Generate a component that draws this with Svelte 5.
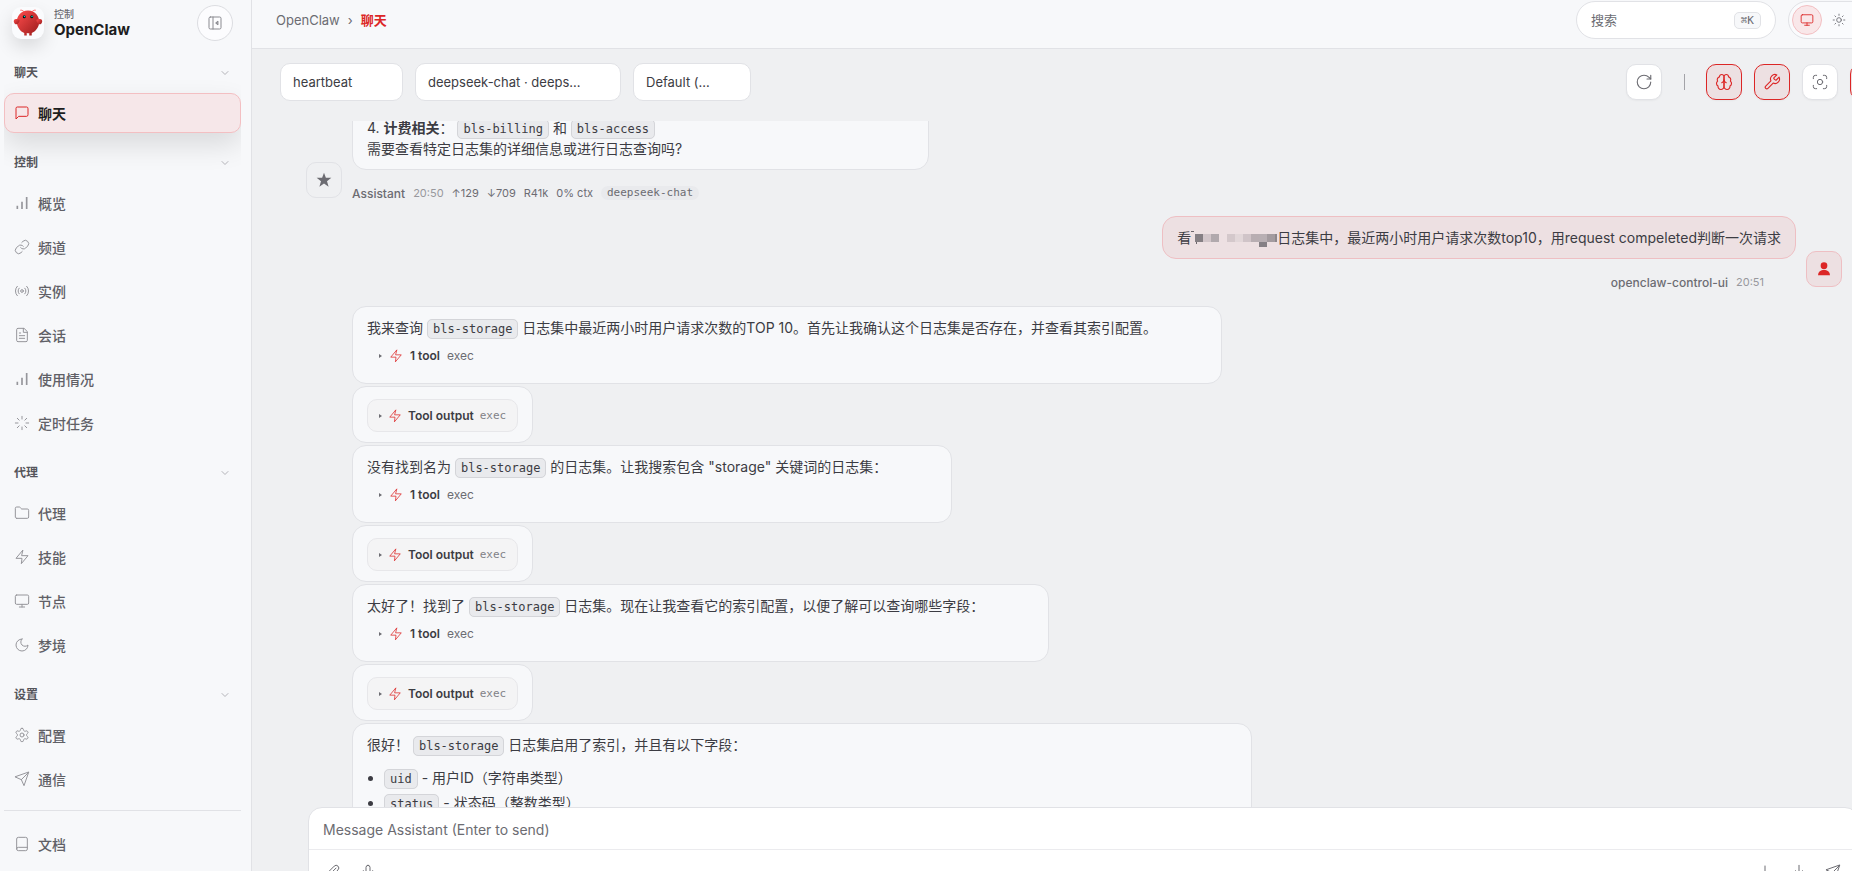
<script lang="ts">
  let draft = $state('')
  let session = $state('heartbeat')
  let model = $state('deepseek-chat · deeps…')
  let thinking = $state('Default (…')

  const icons = {
    chat: '<path d="M21 15a2 2 0 0 1-2 2H7l-4 4V5a2 2 0 0 1 2-2h14a2 2 0 0 1 2 2z"/>',
    bars: '<path stroke-width="2.5" stroke-linecap="butt" d="M12 21V10M19 21V3M5 21v-5"/>',
    link: '<path d="M10 13a5 5 0 0 0 7.54.54l3-3a5 5 0 0 0-7.07-7.07l-1.72 1.71"/><path d="M14 11a5 5 0 0 0-7.54-.54l-3 3a5 5 0 0 0 7.07 7.07l1.71-1.71"/>',
    radio: '<circle cx="12" cy="12" r="2"/><path d="M16.24 7.76a6 6 0 0 1 0 8.49M7.76 16.24a6 6 0 0 1 0-8.49M19.07 4.93a10 10 0 0 1 0 14.14M4.93 19.07a10 10 0 0 1 0-14.14"/>',
    file: '<path d="M14.5 2H6a2 2 0 0 0-2 2v16a2 2 0 0 0 2 2h12a2 2 0 0 0 2-2V7.5z"/><path d="M14 2v6h6M16 13H8M16 17H8M10 9H8"/>',
    loader: '<path d="M12 2v4M12 18v4M4.93 4.93l2.83 2.83M16.24 16.24l2.83 2.83M2 12h4M18 12h4M4.93 19.07l2.83-2.83M16.24 7.76l2.83-2.83"/>',
    folder: '<path d="M4 20h16a2 2 0 0 0 2-2V8a2 2 0 0 0-2-2h-7.93a2 2 0 0 1-1.66-.9l-.82-1.2A2 2 0 0 0 7.93 3H4a2 2 0 0 0-2 2v13c0 1.1.9 2 2 2Z"/>',
    zap: '<path d="M13 2 3 14h9l-1 8 10-12h-9z"/>',
    monitor: '<rect width="20" height="14" x="2" y="3" rx="2"/><path d="M8 21h8M12 17v4"/>',
    moon: '<path d="M12 3a6 6 0 0 0 9 9 9 9 0 1 1-9-9Z"/>',
    settings: '<path d="M12.22 2h-.44a2 2 0 0 0-2 2v.18a2 2 0 0 1-1 1.73l-.43.25a2 2 0 0 1-2 0l-.15-.08a2 2 0 0 0-2.73.73l-.22.38a2 2 0 0 0 .73 2.73l.15.1a2 2 0 0 1 1 1.72v.51a2 2 0 0 1-1 1.74l-.15.09a2 2 0 0 0-.73 2.73l.22.38a2 2 0 0 0 2.73.73l.15-.08a2 2 0 0 1 2 0l.43.25a2 2 0 0 1 1 1.73V20a2 2 0 0 0 2 2h.44a2 2 0 0 0 2-2v-.18a2 2 0 0 1 1-1.73l.43-.25a2 2 0 0 1 2 0l.15.08a2 2 0 0 0 2.73-.73l.22-.39a2 2 0 0 0-.73-2.73l-.15-.08a2 2 0 0 1-1-1.74v-.5a2 2 0 0 1 1-1.74l.15-.09a2 2 0 0 0 .73-2.73l-.22-.38a2 2 0 0 0-2.73-.73l-.15.08a2 2 0 0 1-2 0l-.43-.25a2 2 0 0 1-1-1.73V4a2 2 0 0 0-2-2z"/><circle cx="12" cy="12" r="3"/>',
    send: '<path d="m22 2-7 20-4-9-9-4Z"/><path d="M22 2 11 13"/>',
    book: '<path d="M4 19.5v-15A2.5 2.5 0 0 1 6.5 2h11A2.5 2.5 0 0 1 20 4.5v15a2.5 2.5 0 0 1-2.5 2.5h-11A2.5 2.5 0 0 1 4 19.5 2.5 2.5 0 0 1 6.5 17H20"/>',
    chevron: '<path d="m6 9 6 6 6-6"/>',
    panel: '<rect width="18" height="18" x="3" y="3" rx="2"/><path d="M9 3v18"/><path d="M16 9.5 13 12l3 2.5z" fill="currentColor"/>',
    sun: '<circle cx="12" cy="12" r="4"/><path d="M12 2v2M12 20v2M4.93 4.93l1.41 1.41M17.66 17.66l1.41 1.41M2 12h2M20 12h2M6.34 17.66l-1.41 1.41M19.07 4.93l-1.41 1.41"/>',
    refresh: '<path d="M21 12a9 9 0 1 1-9-9c2.52 0 4.93 1 6.74 2.74L21 8"/><path d="M21 3v5h-5"/>',
    brain: '<path d="M12 5a3 3 0 1 0-5.997.125 4 4 0 0 0-2.526 5.77 4 4 0 0 0 .556 6.588A4 4 0 1 0 12 18Z"/><path d="M12 5a3 3 0 1 1 5.997.125 4 4 0 0 1 2.526 5.77 4 4 0 0 1-.556 6.588A4 4 0 1 1 12 18Z"/><path d="M15 13a4.5 4.5 0 0 1-3-4 4.5 4.5 0 0 1-3 4"/>',
    wrench: '<path d="M14.7 6.3a1 1 0 0 0 0 1.4l1.6 1.6a1 1 0 0 0 1.4 0l3.77-3.77a6 6 0 0 1-7.94 7.94l-6.91 6.91a2.12 2.12 0 0 1-3-3l6.91-6.91a6 6 0 0 1 7.94-7.94l-3.76 3.76z"/>',
    focus: '<circle cx="12" cy="12" r="4"/><path d="M2 7V5a3 3 0 0 1 3-3h2M17 2h2a3 3 0 0 1 3 3v2M22 17v2a3 3 0 0 1-3 3h-2M7 22H5a3 3 0 0 1-3-3v-2"/>',
    clock: '<circle cx="12" cy="12" r="9"/><path d="M12 7v5l3 2"/>',
    clip: '<path d="m21.44 11.05-9.19 9.19a6 6 0 0 1-8.49-8.49l8.57-8.57A4 4 0 1 1 18 8.84l-8.59 8.57a2 2 0 0 1-2.83-2.83l8.49-8.48"/>',
    mic: '<path d="M12 2a3 3 0 0 0-3 3v7a3 3 0 0 0 6 0V5a3 3 0 0 0-3-3Z"/><path d="M19 10v2a7 7 0 0 1-14 0v-2M12 19v3"/>',
    plus: '<path d="M12 3v18M3 12h18"/>',
    download: '<path d="M12 2v13M7 10l5 5 5-5M4 21h16"/>',
    star: '<path fill="currentColor" stroke="none" d="m12 1 2.800 7.800H23l-6.500 5 2.400 8.200-6.900-4.800L5.100 22l2.400-8.200-6.500-5h8.200z"/>',
    user: '<g fill="currentColor" stroke="none"><circle cx="12" cy="7" r="5"/><path d="M3 21.500a9 8.500 0 0 1 18 0z"/></g>',
  }

  const groups = [
    { title: '聊天', items: [{ icon: 'chat', label: '聊天', active: true }] },
    {
      title: '控制',
      items: [
        { icon: 'bars', label: '概览' },
        { icon: 'link', label: '频道' },
        { icon: 'radio', label: '实例' },
        { icon: 'file', label: '会话' },
        { icon: 'bars', label: '使用情况' },
        { icon: 'loader', label: '定时任务' },
      ],
    },
    {
      title: '代理',
      items: [
        { icon: 'folder', label: '代理' },
        { icon: 'zap', label: '技能' },
        { icon: 'monitor', label: '节点' },
        { icon: 'moon', label: '梦境' },
      ],
    },
    {
      title: '设置',
      items: [
        { icon: 'settings', label: '配置' },
        { icon: 'send', label: '通信' },
      ],
    },
  ]

  const steps = [
    { before: '我来查询', after: '日志集中最近两小时用户请求次数的TOP 10。首先让我确认这个日志集是否存在，并查看其索引配置。' },
    { before: '没有找到名为', after: '的日志集。让我搜索包含 "storage" 关键词的日志集：' },
    { before: '太好了！找到了', after: '日志集。现在让我查看它的索引配置，以便了解可以查询哪些字段：' },
  ]

  // x, y, width, height, color
  const mosaic = [
    [4, 4, 8, 8, '#857f84'],
    [12, 4, 8, 8, '#d2c6ca'],
    [20, 4, 8, 8, '#b1a9ad'],
    [36, 4, 8, 8, '#d4c8cb'],
    [44, 4, 8, 8, '#e2d7d9'],
    [52, 4, 8, 8, '#d0c4c8'],
    [60, 4, 8, 8, '#b8aeb2'],
    [68, 4, 8, 8, '#b8afb3'],
    [76, 4, 8, 8, '#a39b9f'],
    [68, 12, 8, 5, '#858085'],
    [84, 4, 2, 8, '#8d878b'],
    [0, 1, 3, 1, '#6b666b'],
    [5, 12, 1, 2, '#6b666b'],
  ]
</script>

{#snippet icon(name, size = 16)}
  <svg class="icon" width={size} height={size} viewBox="0 0 24 24" aria-hidden="true">{@html icons[name]}</svg>
{/snippet}

<div class="shell">
  <aside class="sidebar">
    <header class="brand">
      <span class="logo">
        <svg width="30" height="30" viewBox="0 0 120 120" aria-hidden="true">
          <defs>
            <linearGradient id="claw" x1="0" y1="0" x2="1" y2="1">
              <stop offset="0" stop-color="#ff4d4d" />
              <stop offset="1" stop-color="#991b1b" />
            </linearGradient>
          </defs>
          <g fill="url(#claw)">
            <path d="M60 10C30 10 15 35 15 55s15 40 30 45v10h10v-10s5 2 10 0v10h10v-10c15-5 30-25 30-45S90 10 60 10Z" />
            <path d="M20 45C5 40 0 50 5 60s15 5 20-5c3-7 0-10-5-10Z" />
            <path d="M100 45c15-5 20 5 15 15s-15 5-20-5c-3-7 0-10 5-10Z" />
          </g>
          <path d="M45 15Q35 5 30 8M75 15Q85 5 90 8" fill="none" stroke="#ff4d4d" stroke-width="3" stroke-linecap="round" />
          <circle cx="45" cy="35" r="6" fill="#050810" />
          <circle cx="75" cy="35" r="6" fill="#050810" />
          <circle cx="46" cy="34" r="3" fill="#00e5cc" />
          <circle cx="76" cy="34" r="3" fill="#00e5cc" />
        </svg>
      </span>
      <div class="brand-text">
        <span class="eyebrow">控制</span>
        <span class="name">OpenClaw</span>
      </div>
      <button class="collapse" aria-label="Collapse sidebar">{@render icon('panel')}</button>
    </header>

    <nav>
      {#each groups as group}
        <section>
          <button class="group-title">
            {group.title}
            {@render icon('chevron', 12)}
          </button>
          {#each group.items as item}
            <a class="item" class:active={item.active} href="#{item.icon}">
              {@render icon(item.icon)}
              {item.label}
            </a>
          {/each}
        </section>
      {/each}
    </nav>

    <footer>
      <a class="item" href="#docs">{@render icon('book')} 文档</a>
    </footer>
  </aside>

  <main>
    <header class="topbar">
      <div class="crumbs">
        <a href="#home">OpenClaw</a>
        <span>›</span>
        <strong>聊天</strong>
      </div>
      <button class="search">搜索 <kbd>⌘K</kbd></button>
      <div class="themes">
        <button class="selected" aria-label="System theme">{@render icon('monitor', 14)}</button>
        <button aria-label="Light theme">{@render icon('sun', 14)}</button>
        <button aria-label="Dark theme">{@render icon('moon', 14)}</button>
      </div>
    </header>

    <div class="toolbar">
      <select class="session" bind:value={session} aria-label="Session">
        <option>heartbeat</option>
      </select>
      <select class="model" bind:value={model} aria-label="Model">
        <option>deepseek-chat · deeps…</option>
      </select>
      <select class="thinking" bind:value={thinking} aria-label="Thinking level">
        <option>Default (…</option>
      </select>
      <div class="tools">
        <button aria-label="Refresh">{@render icon('refresh', 18)}</button>
        <span class="separator"></span>
        <button class="on" aria-label="Show thinking">{@render icon('brain', 18)}</button>
        <button class="on" aria-label="Show tool calls">{@render icon('wrench', 18)}</button>
        <button aria-label="Focus mode">{@render icon('focus')}</button>
        <button class="on" aria-label="Scheduled sessions">{@render icon('clock')}</button>
      </div>
    </div>

    <div class="thread">
      <div class="group first">
        <span class="avatar">{@render icon('star')}</span>
        <div class="messages">
          <div class="bubble summary">
            <div>4. <strong>计费相关</strong>： <code>bls-billing</code> 和 <code>bls-access</code></div>
            <div>需要查看特定日志集的详细信息或进行日志查询吗?</div>
          </div>
          <div class="meta">
            <span class="sender">Assistant</span>
            <time>20:50</time>
            <span>↑129</span>
            <span>↓709</span>
            <span>R41k</span>
            <span>0% ctx</span>
            <span class="pill">deepseek-chat</span>
          </div>
        </div>
      </div>

      <div class="group mine">
        <div class="messages">
          <div class="bubble">看<svg class="mosaic" width="86" height="17" viewBox="0 0 86 17" aria-hidden="true">
              {#each mosaic as [x, y, width, height, fill]}
                <rect {x} {y} {width} {height} {fill} />
              {/each}
            </svg>日志集中，最近两小时用户请求次数top10，用request compeleted判断一次请求</div>
          <div class="meta">
            <span class="sender">openclaw-control-ui</span>
            <time>20:51</time>
          </div>
        </div>
        <span class="avatar">{@render icon('user')}</span>
      </div>

      <div class="group pending">
        <div class="messages">
          {#each steps as step}
            <div class="bubble step">
              <div>{step.before} <code>bls-storage</code> {step.after}</div>
              <button class="tool-call">
                <i class="caret"></i>
                {@render icon('zap', 14)}
                <strong>1 tool</strong>
                <span>exec</span>
              </button>
            </div>
            <div class="bubble output">
              <button class="tool-card">
                <i class="caret"></i>
                {@render icon('zap', 14)}
                <strong>Tool output</strong>
                <span>exec</span>
              </button>
            </div>
          {/each}
          <div class="bubble fields">
            <div>很好！ <code>bls-storage</code> 日志集启用了索引，并且有以下字段：</div>
            <ul>
              <li><code>uid</code> - 用户ID（字符串类型）</li>
              <li><code>status</code> - 状态码（整数类型）</li>
            </ul>
          </div>
        </div>
      </div>
    </div>

    <div class="composer">
      <textarea rows="1" bind:value={draft} placeholder="Message Assistant (Enter to send)" aria-label="Message"></textarea>
      <div class="actions">
        <button aria-label="Attach file">{@render icon('clip')}</button>
        <button aria-label="Voice input">{@render icon('mic')}</button>
        <span class="spacer"></span>
        <button aria-label="New session">{@render icon('plus')}</button>
        <button aria-label="Export">{@render icon('download')}</button>
        <button aria-label="Send">{@render icon('send')}</button>
      </div>
    </div>
  </main>
</div>

<style>
  :global(body) {
    margin: 0;
  }

  .shell {
    --accent: #dc2626;
    --accent-soft: #ede0e2;
    --bg: #eff0f2;
    --panel: #f7f8fa;
    --border: #e1e2e6;
    --text: #3c3c43;
    --strong: #1d1d20;
    --muted: #6c6c72;
    --mono: "DejaVu Sans Mono", "Liberation Mono", monospace;
    display: grid;
    grid-template: 100% / 252px 1fr;
    height: 100vh;
    overflow: hidden;
    color: var(--text);
    background: var(--bg);
    font: 14px/21px Inter, "Noto Sans CJK SC", sans-serif;
  }

  .shell *, .shell {
    box-sizing: border-box;
  }

  button {
    padding: 0;
    color: inherit;
    background: none;
    border: none;
    font: inherit;
    cursor: pointer;
  }

  a {
    color: inherit;
    text-decoration: none;
  }

  .icon {
    flex: none;
    fill: none;
    stroke: currentColor;
    stroke-width: 1.5;
    stroke-linecap: round;
    stroke-linejoin: round;
  }

  .sidebar {
    display: flex;
    flex-direction: column;
    min-height: 0;
    background: var(--panel);
    border-right: 1px solid var(--border);
  }

  .brand {
    display: flex;
    align-items: center;
    gap: 10px;
    padding: 5px 18px 15px 12px;
  }

  .logo {
    display: grid;
    place-items: center;
    width: 32px;
    height: 32px;
    background: #fafbfd;
    border-radius: 9px;
    box-shadow: 0 8px 18px rgba(0, 0, 0, 0.12);
  }

  .brand-text {
    display: flex;
    flex: 1;
    flex-direction: column;
  }

  .eyebrow {
    color: var(--muted);
    font-size: 10px;
    font-weight: 500;
    line-height: 14px;
  }

  .name {
    color: var(--strong);
    font-size: 15px;
    font-weight: 700;
    line-height: 18px;
  }

  .collapse {
    display: grid;
    place-items: center;
    width: 36px;
    height: 36px;
    color: #8a8a90;
    background: #fcfcfe;
    border: 1px solid #dcdde1;
    border-radius: 50%;
  }

  nav {
    display: flex;
    flex: 1;
    flex-direction: column;
    gap: 13px;
    min-height: 0;
    margin: 0 10px 0 4px;
    overflow: hidden;
  }

  section {
    display: flex;
    flex-direction: column;
    gap: 4px;
  }

  .group-title {
    display: flex;
    align-items: center;
    justify-content: space-between;
    height: 33px;
    padding: 0 10px;
    color: #55555b;
    font-size: 12px;
    font-weight: 600;
  }

  .group-title .icon {
    color: #b4b4b9;
    stroke-width: 2;
  }

  .item {
    display: flex;
    align-items: center;
    gap: 8px;
    height: 40px;
    padding: 0 9px;
    color: #606066;
    border: 1px solid transparent;
    border-radius: 10px;
    font-weight: 500;
  }

  .item .icon {
    color: #96969b;
  }

  .item.active {
    color: var(--strong);
    background: #f6e7e9;
    border-color: #f3bfc2;
    font-weight: 600;
    box-shadow: 0 12px 28px rgba(0, 0, 0, 0.12);
  }

  .item.active .icon {
    color: var(--accent);
  }

  footer {
    margin: 0 10px 0 4px;
    padding: 13px 0 7px;
    border-top: 1px solid var(--border);
  }

  /* the conversation pane runs past the right and bottom edges of the window */
  main {
    display: flex;
    flex-direction: column;
    min-width: 0;
    height: calc(100vh + 40px);
    margin-right: -58px;
  }

  .topbar {
    display: flex;
    flex: none;
    align-items: center;
    gap: 12px;
    padding: 1px 20px 9px 24px;
    background: var(--panel);
    border-bottom: 1px solid var(--border);
  }

  .crumbs {
    display: flex;
    flex: 1;
    gap: 8px;
    color: var(--muted);
    font-size: 13px;
    line-height: 20px;
  }

  .crumbs strong {
    color: var(--accent);
  }

  .search {
    display: flex;
    align-items: center;
    justify-content: space-between;
    width: 200px;
    height: 38px;
    padding: 0 14px;
    color: var(--muted);
    background: #fff;
    border: 1px solid var(--border);
    border-radius: 19px;
    font-size: 13px;
  }

  kbd {
    padding: 0 6px;
    background: var(--panel);
    border: 1px solid var(--border);
    border-radius: 5px;
    font: 11px/15px var(--mono);
  }

  .themes {
    display: flex;
    gap: 2px;
    padding: 3px;
    color: var(--muted);
    background: #fafbfd;
    border: 1px solid var(--border);
    border-radius: 19px;
  }

  .themes button {
    display: grid;
    place-items: center;
    width: 30px;
    height: 30px;
    border: 1px solid transparent;
    border-radius: 50%;
  }

  .themes .selected {
    color: var(--accent);
    background: #f9e7e9;
    border-color: #f3bfc2;
  }

  .toolbar {
    display: flex;
    flex: none;
    align-items: center;
    gap: 12px;
    padding: 14px 24px 20px 28px;
  }

  select {
    height: 38px;
    padding: 0 12px;
    color: var(--text);
    background: #fff;
    border: 1px solid var(--border);
    border-radius: 10px;
    font: 13px Inter, sans-serif;
    appearance: none;
  }

  .session {
    width: 123px;
  }

  .model {
    width: 206px;
  }

  .thinking {
    width: 118px;
  }

  .tools {
    display: flex;
    align-items: center;
    gap: 12px;
    margin-left: auto;
  }

  .tools button {
    display: grid;
    place-items: center;
    width: 36px;
    height: 36px;
    color: var(--muted);
    background: #fff;
    border: 1px solid var(--border);
    border-radius: 10px;
    box-shadow: 0 1px 2px rgba(0, 0, 0, 0.04);
  }

  .tools .on {
    color: var(--accent);
    background: var(--accent-soft);
    border-color: var(--accent);
  }

  .separator {
    width: 1px;
    height: 16px;
    margin: 0 9px 0 10px;
    background: #a3a3a8;
  }

  .thread {
    display: flex;
    flex: 1;
    flex-direction: column;
    gap: 15px;
    min-height: 0;
    padding: 0 68px 0 54px;
    overflow: hidden;
  }

  .group {
    display: flex;
    flex: none;
    align-items: flex-end;
    gap: 10px;
  }

  /* scrolled partly out of view */
  .first {
    margin: -15px 0 -1px;
  }

  .mine {
    justify-content: flex-end;
  }

  /* keeps the avatar column free */
  .pending {
    padding-left: 46px;
  }

  .messages {
    display: flex;
    flex-direction: column;
    align-items: flex-start;
    gap: 2px;
  }

  .mine .messages {
    align-items: flex-end;
  }

  .avatar {
    display: grid;
    flex: none;
    place-items: center;
    width: 36px;
    height: 36px;
    margin-bottom: 4px;
    color: var(--muted);
    border: 1px solid var(--border);
    border-radius: 10px;
  }

  .mine .avatar {
    color: var(--accent);
    background: var(--accent-soft);
    border-color: #eebfc3;
  }

  .bubble {
    padding: 10px 14px;
    background: var(--panel);
    border: 1px solid var(--border);
    border-radius: 14px;
  }

  .mine .bubble {
    background: var(--accent-soft);
    border-color: #eebfc3;
  }

  .summary {
    min-width: 577px;
  }

  .step {
    padding-right: 64px;
  }

  .output {
    padding-top: 12px;
  }

  .fields {
    min-width: 900px;
  }

  .mosaic {
    vertical-align: -4px;
  }

  code {
    padding: 2px 5px;
    background: #e9eaed;
    border: 1px solid #d4d5d9;
    border-radius: 5px;
    font: 12px/16px var(--mono);
  }

  ul {
    margin: 12px 0 0;
    padding-left: 17px;
  }

  li {
    margin-bottom: 4px;
  }

  .meta {
    display: flex;
    align-items: center;
    gap: 8px;
    height: 18px;
    margin-top: 12px;
    color: var(--muted);
    font-size: 11px;
  }

  .mine .meta {
    padding-right: 32px;
  }

  .sender {
    font-size: 12px;
    font-weight: 500;
  }

  time {
    color: #98989d;
  }

  .pill {
    padding: 0 6px;
    background: #e9eaed;
    border-radius: 7px;
    font: 11px/14px var(--mono);
  }

  .tool-call, .tool-card {
    display: flex;
    align-items: center;
    gap: 6px;
    font-size: 12px;
  }

  .tool-call {
    gap: 7px;
    height: 23px;
    margin: 6px 0;
    padding: 0 12px;
  }

  .tool-card {
    height: 33px;
    padding: 0 11px;
    background: #f4f4f5;
    border: 1px solid #e7e7ea;
    border-radius: 10px;
  }

  .tool-call strong, .tool-card strong {
    font-weight: 600;
  }

  .tool-call span {
    color: var(--muted);
  }

  .tool-card span {
    color: #818187;
    font: 11px var(--mono);
  }

  .tool-call .icon, .tool-card .icon {
    color: var(--accent);
    stroke-width: 1.3;
  }

  .caret {
    width: 3px;
    border: solid transparent;
    border-width: 2px 0 2px 3px;
    border-left-color: var(--muted);
  }

  .composer {
    flex: none;
    margin: 0 51px 16px 56px;
    background: #fff;
    border: 1px solid var(--border);
    border-radius: 14px;
  }

  textarea {
    display: block;
    width: 100%;
    height: 42px;
    padding: 12px 14px 9px;
    color: var(--text);
    background: none;
    border: none;
    border-bottom: 1px solid #ebebee;
    outline: none;
    font: 14px/20px Inter, "Noto Sans CJK SC", sans-serif;
    resize: none;
  }

  textarea::placeholder {
    color: var(--muted);
  }

  .actions {
    display: flex;
    gap: 2px;
    padding: 6px 9px;
    color: var(--muted);
  }

  .actions button {
    display: grid;
    place-items: center;
    width: 32px;
    height: 32px;
  }

  .spacer {
    flex: 1;
  }
</style>
